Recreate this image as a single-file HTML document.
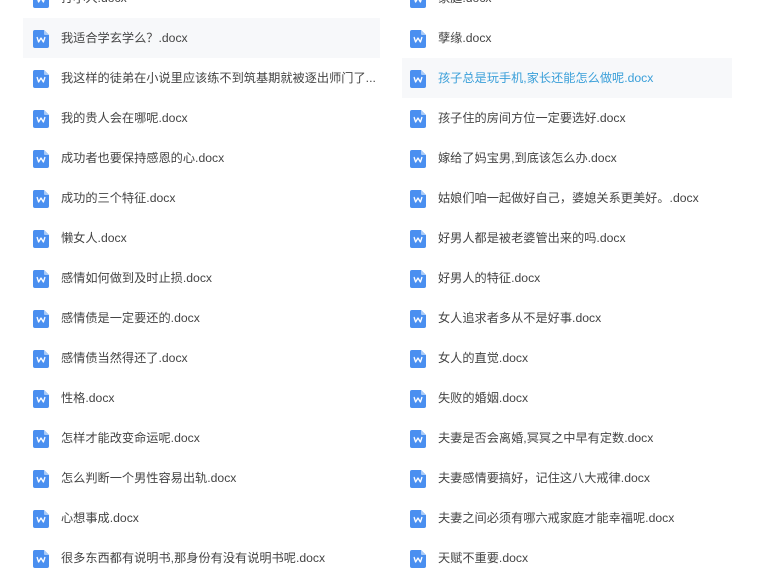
<!DOCTYPE html>
<html><head><meta charset="utf-8"><style>
body{margin:0;width:757px;height:556px;overflow:hidden;background:#fff;position:relative;font-family:"Liberation Sans","Noto Sans CJK SC",sans-serif;font-size:12.2px;color:#444}
.r{position:absolute;height:40px;line-height:40px;white-space:nowrap}
.r svg{position:absolute;top:12px}
.l{left:23px;width:357px}
.l svg{left:10px}.l span{position:absolute;left:38px}
.g{left:402px;width:330px}
.g svg{left:8px}.g span{position:absolute;left:36px}
.h{background:#f7f8fa}
.b span{color:#3a9fd9}
</style></head><body>
<svg width="0" height="0" style="position:absolute"><defs><g id="i"><path d="M2 0H11L16 5V16A2 2 0 0 1 14 18H2A2 2 0 0 1 0 16V2A2 2 0 0 1 2 0Z" fill="#4a8ff0"/><path d="M11 0V4A1 1 0 0 0 12 5H16Z" fill="#a9cbf8"/><path d="M4 7L5.6 12L8 8L10.4 12L12 7" fill="none" stroke="#fff" stroke-width="1.3" stroke-linejoin="round"/></g></defs></svg>
<div id="c"></div>
<script>
var L=["打小人.docx","我适合学玄学么？.docx","我这样的徒弟在小说里应该练不到筑基期就被逐出师门了...","我的贵人会在哪呢.docx","成功者也要保持感恩的心.docx","成功的三个特征.docx","懒女人.docx","感情如何做到及时止损.docx","感情债是一定要还的.docx","感情债当然得还了.docx","性格.docx","怎样才能改变命运呢.docx","怎么判断一个男性容易出轨.docx","心想事成.docx","很多东西都有说明书,那身份有没有说明书呢.docx"];
var R=["家庭.docx","孽缘.docx","孩子总是玩手机,家长还能怎么做呢.docx","孩子住的房间方位一定要选好.docx","嫁给了妈宝男,到底该怎么办.docx","姑娘们咱一起做好自己，婆媳关系更美好。.docx","好男人都是被老婆管出来的吗.docx","好男人的特征.docx","女人追求者多从不是好事.docx","女人的直觉.docx","失败的婚姻.docx","夫妻是否会离婚,冥冥之中早有定数.docx","夫妻感情要搞好，记住这八大戒律.docx","夫妻之间必须有哪六戒家庭才能幸福呢.docx","天赋不重要.docx"];
var h="";
for(var i=0;i<15;i++){var t=-22+40*i;
h+='<div class="r l'+(i==1?' h':'')+'" style="top:'+t+'px"><svg width="16" height="18"><use href="#i"/></svg><span>'+L[i]+'</span></div>';
h+='<div class="r g'+(i==2?' h b':'')+'" style="top:'+t+'px"><svg width="16" height="18"><use href="#i"/></svg><span>'+R[i]+'</span></div>';}
document.getElementById("c").innerHTML=h;
</script>
</body></html>
